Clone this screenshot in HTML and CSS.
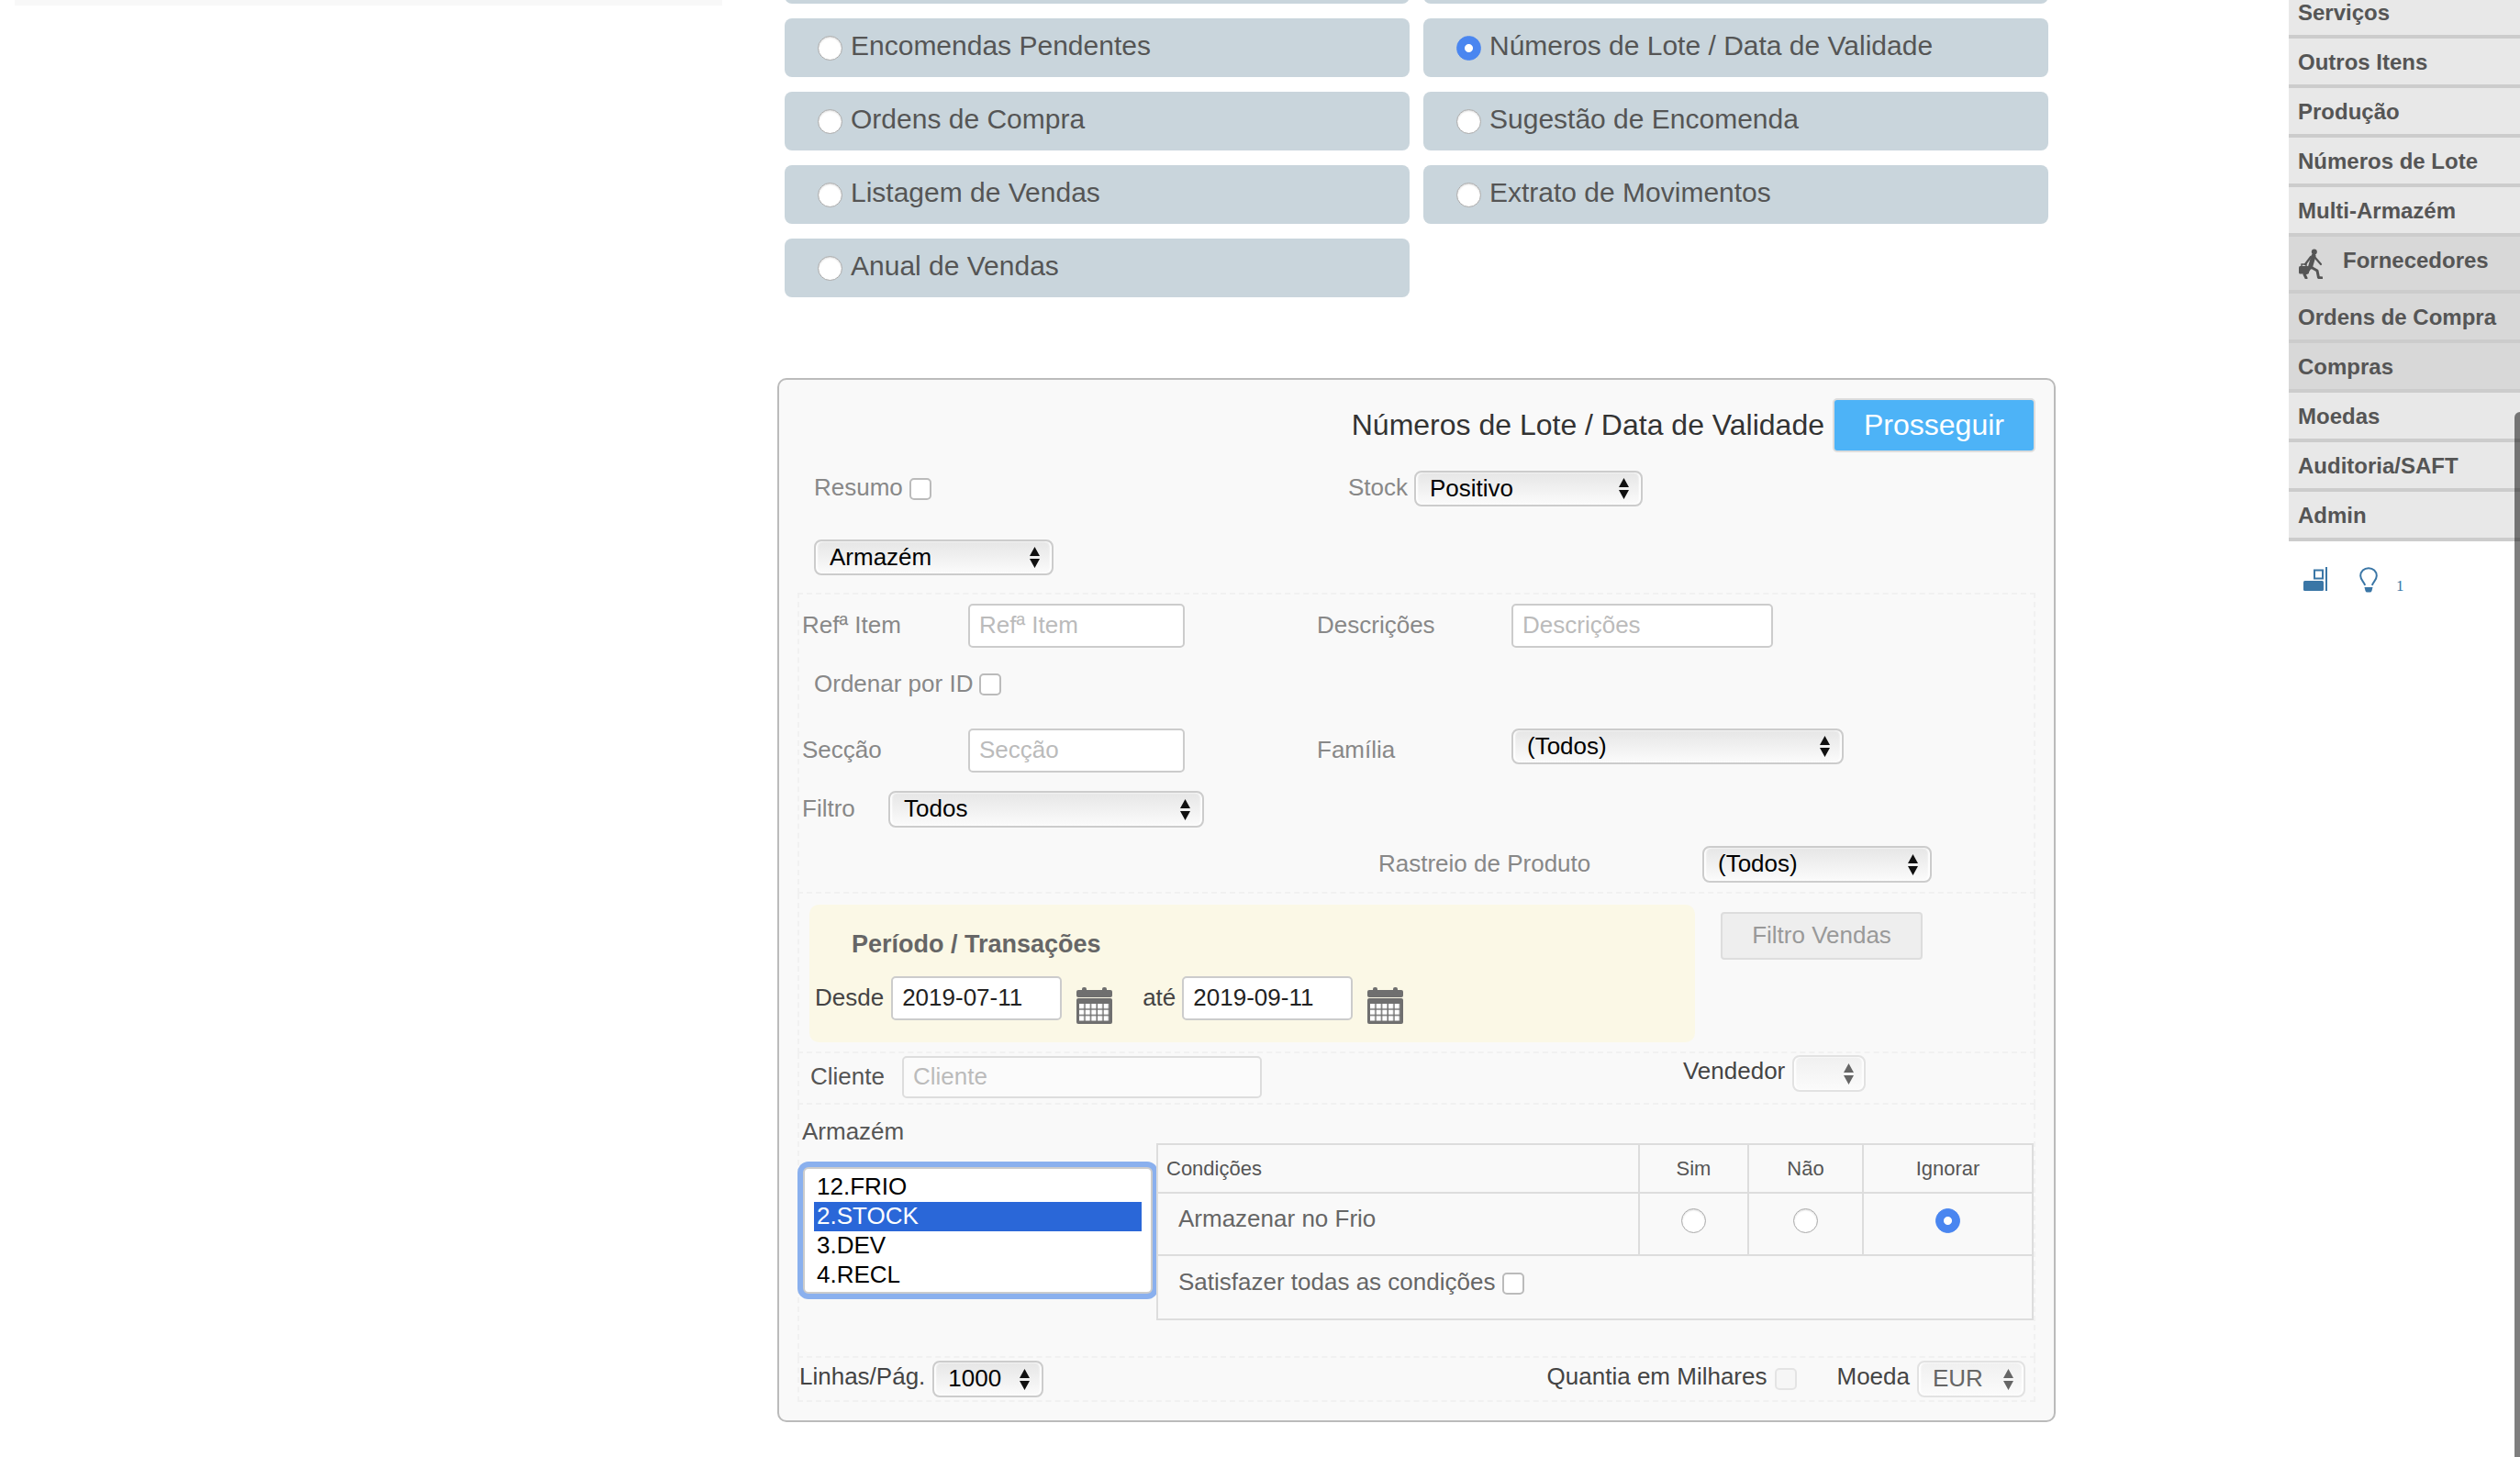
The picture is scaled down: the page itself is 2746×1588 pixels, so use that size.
FILE: index.html
```html
<!DOCTYPE html>
<html lang="pt">
<head>
    <meta charset="UTF-8">
    <title>Números de Lote / Data de Validade</title>
    <link rel="stylesheet" href="styles.css">
</head>
<body>
    <svg class="defs" width="0" height="0">
        <defs>
            <pattern id="cells" x="3" y="18" width="6.67" height="6.67" patternUnits="userSpaceOnUse">
                <rect width="5.2" height="5.2" fill="#fff"/>
            </pattern>
            <symbol id="calendar" viewBox="0 0 39 40">
                <rect x="0" y="3" width="39" height="8" rx="2" fill="#6f6f6f"/>
                <rect x="6" y="0" width="5" height="6" rx="2" fill="#6f6f6f"/>
                <rect x="28" y="0" width="5" height="6" rx="2" fill="#6f6f6f"/>
                <rect x="0" y="12" width="39" height="28" rx="2" fill="#6f6f6f"/>
                <rect x="3" y="18" width="33" height="19" fill="url(#cells)"/>
            </symbol>
        </defs>
    </svg>
    <div class="page">
        <div class="left-bar"></div>
        <div class="main">
            <div class="options">
                <div class="option"></div>
                <div class="option"></div>
                <label class="option"><input type="radio" class="radio">Encomendas Pendentes</label>
                <label class="option"><input type="radio" class="radio" checked>Números de Lote / Data de Validade</label>
                <label class="option"><input type="radio" class="radio">Ordens de Compra</label>
                <label class="option"><input type="radio" class="radio">Sugestão de Encomenda</label>
                <label class="option"><input type="radio" class="radio">Listagem de Vendas</label>
                <label class="option"><input type="radio" class="radio">Extrato de Movimentos</label>
                <label class="option"><input type="radio" class="radio">Anual de Vendas</label>
            </div>

            <form class="panel">
                <div class="panel-head">
                    <span class="panel-title">Números de Lote / Data de Validade</span>
                    <button type="button" class="go">Prosseguir</button>
                </div>

                <div class="row-top">
                    <div class="resumo">
                        <span class="lbl">Resumo</span>
                        <input type="checkbox" class="check">
                    </div>
                    <span class="lbl">Stock</span>
                    <select class="sel sel-stock"><option>Positivo</option></select>
                </div>
                <div class="row-group">
                    <select class="sel sel-group"><option>Armazém</option></select>
                </div>

                <div class="sec sec-filters">
                    <div class="field-row">
                        <span class="lbl">Refª Item</span>
                        <input type="text" class="txt txt-short" placeholder="Refª Item">
                        <span class="lbl">Descrições</span>
                        <input type="text" class="txt txt-long" placeholder="Descrições">
                    </div>
                    <div class="row-order">
                        <span class="lbl">Ordenar por ID</span>
                        <input type="checkbox" class="check">
                    </div>
                    <div class="field-row row-section">
                        <span class="lbl">Secção</span>
                        <input type="text" class="txt txt-short" placeholder="Secção">
                        <span class="lbl">Família</span>
                        <select class="sel sel-family"><option>(Todos)</option></select>
                    </div>
                    <div class="row-filter">
                        <span class="lbl lbl-filter">Filtro</span>
                        <select class="sel sel-filter"><option>Todos</option></select>
                    </div>
                    <div class="row-track">
                        <span class="lbl lbl-track">Rastreio de Produto</span>
                        <select class="sel sel-track"><option>(Todos)</option></select>
                    </div>
                </div>

                <div class="sec sec-period">
                    <div class="period">
                        <div class="period-title">Período / Transações</div>
                        <div class="period-dates">
                            <span class="lbl-dark">Desde</span>
                            <input type="text" class="txt txt-date" value="2019-07-11">
                            <svg class="cal"><use href="#calendar"/></svg>
                            <span class="lbl-dark lbl-until">até</span>
                            <input type="text" class="txt txt-date" value="2019-09-11">
                            <svg class="cal"><use href="#calendar"/></svg>
                        </div>
                    </div>
                    <button type="button" class="sales">Filtro Vendas</button>
                </div>

                <div class="sec sec-client">
                    <span class="lbl-dark lbl-client">Cliente</span>
                    <input type="text" class="txt txt-client" placeholder="Cliente">
                    <span class="lbl-dark lbl-seller">Vendedor</span>
                    <select class="sel sel-off sel-seller"><option></option></select>
                </div>

                <div class="sec sec-stores">
                    <div class="stores">
                        <div class="lbl-dark lbl-stores">Armazém</div>
                        <div class="listbox">
                            <div class="item">12.FRIO</div>
                            <div class="item item-on">2.STOCK</div>
                            <div class="item">3.DEV</div>
                            <div class="item">4.RECL</div>
                        </div>
                    </div>
                    <table class="conds">
                        <tr class="conds-head">
                            <th class="c-name">Condições</th>
                            <th class="c-yes">Sim</th>
                            <th class="c-no">Não</th>
                            <th class="c-skip">Ignorar</th>
                        </tr>
                        <tr class="conds-row">
                            <td class="c-text">Armazenar no Frio</td>
                            <td class="c-radio"><input type="radio" class="radio"></td>
                            <td class="c-radio"><input type="radio" class="radio"></td>
                            <td class="c-radio"><input type="radio" class="radio" checked></td>
                        </tr>
                        <tr class="conds-all">
                            <td class="c-text" colspan="4">Satisfazer todas as condições <input type="checkbox" class="check"></td>
                        </tr>
                    </table>
                </div>

                <div class="sec sec-bottom">
                    <span class="lbl-dark">Linhas/Pág.</span>
                    <select class="sel sel-lines"><option>1000</option></select>
                    <span class="lbl-dark lbl-thousands">Quantia em Milhares</span>
                    <input type="checkbox" class="check check-off">
                    <span class="lbl-dark lbl-currency">Moeda</span>
                    <select class="sel sel-off sel-currency"><option>EUR</option></select>
                </div>
            </form>
        </div>

        <div class="side">
            <a class="side-item">Serviços</a>
            <a class="side-item">Outros Itens</a>
            <a class="side-item">Produção</a>
            <a class="side-item">Números de Lote</a>
            <a class="side-item">Multi-Armazém</a>
            <a class="side-item side-on side-head">
                <svg class="walker" viewBox="0 0 26 33" width="26" height="33">
                    <circle cx="16.8" cy="3.4" r="3" fill="#555"/>
                    <path d="M16 8 L12.5 20" stroke="#555" stroke-width="5" stroke-linecap="round" fill="none"/>
                    <path d="M17 9 L24 17 M13 9 L7 17" stroke="#555" stroke-width="2.2" stroke-linecap="round" fill="none"/>
                    <path d="M13 20 L20 24 L21.5 31.5 L25.5 32 M12 21 L9 26 L6 28 L8 32" stroke="#555" stroke-width="3" stroke-linecap="round" stroke-linejoin="round" fill="none"/>
                    <rect x="0" y="19" width="11" height="8.5" rx="1.5" fill="#555"/>
                    <path d="M3 19 V17 H8 V19" stroke="#555" stroke-width="1.4" fill="none"/>
                </svg>
                <span class="side-head-text">Fornecedores</span>
            </a>
            <a class="side-item side-on">Ordens de Compra</a>
            <a class="side-item side-on">Compras</a>
            <a class="side-item">Moedas</a>
            <a class="side-item">Auditoria/SAFT</a>
            <a class="side-item">Admin</a>
            <div class="side-tools">
                <svg viewBox="0 0 26 26" width="26" height="26">
                    <rect x="0" y="15" width="22" height="11" rx="1.5" fill="#3a76a6"/>
                    <rect x="12" y="3.5" width="9" height="9" fill="none" stroke="#3a76a6" stroke-width="2"/>
                    <rect x="24" y="0" width="2" height="26" fill="#3a76a6"/>
                </svg>
                <svg class="bulb" viewBox="0 0 20 28" width="20" height="28">
                    <path d="M6 20 C5.5 16.5 1.2 14.5 1.2 9.6 C1.2 4.6 5.2 1.2 10 1.2 C14.8 1.2 18.8 4.6 18.8 9.6 C18.8 14.5 14.5 16.5 14 20" fill="none" stroke="#3a76a6" stroke-width="2"/>
                    <path d="M5.5 22 H14.5 L13.5 26 Q13 27.5 11.5 27.5 H8.5 Q7 27.5 6.5 26 Z" fill="#3a76a6"/>
                </svg>
                <span class="tool-count">1</span>
            </div>
        </div>
    </div>
    <div class="scroll-thumb"></div>
</body>
</html>
```

FILE: styles.css
```css
html, body {
    margin: 0;
    height: 1588px;
    overflow: hidden;
    background: #fff;
}
body {
    font-family: "Liberation Sans", Arial, sans-serif;
    font-size: 26px;
    color: #555;
}
.defs {
    display: block;
    height: 0;
}
input, select, button {
    font-family: "Liberation Sans", Arial, sans-serif;
    font-size: 26px;
    margin: 0;
    box-sizing: border-box;
}
.page {
    display: flex;
    align-items: flex-start;
    margin-top: -60px;
}
.left-bar {
    width: 771px;
    height: 66px;
    margin-left: 16px;
    background: #f8f8f8;
}
.main {
    width: 1393px;
    margin-left: 60px;
}

/* report options */
.options {
    display: grid;
    grid-template-columns: 681px 681px;
    grid-auto-rows: 64px;
    column-gap: 15px;
    row-gap: 16px;
    margin-left: 8px;
}
.option {
    display: flex;
    align-items: center;
    padding-left: 36px;
    padding-bottom: 4px;
    box-sizing: border-box;
    background: #c9d5dc;
    border-radius: 8px;
    font-size: 30px;
    color: #555;
}
.radio {
    appearance: none;
    width: 27px;
    height: 27px;
    margin: 4px 9px 0 0;
    flex: none;
    border: 1px solid #aaa;
    border-radius: 50%;
    background: #fff;
    box-shadow: inset 0 1px 2px rgba(0, 0, 0, 0.15);
}
.radio:checked {
    border-color: #4a86f0;
    box-shadow: none;
    background: radial-gradient(circle, #fff 0, #fff 4px, #4a86f0 5px);
}

/* panel */
.panel {
    margin-top: 88px;
    height: 1138px;
    box-sizing: border-box;
    border: 2px solid #bbb;
    border-radius: 10px;
    background: #f9f9f9;
}
.panel-head {
    display: flex;
    justify-content: flex-end;
    align-items: center;
    gap: 9px;
    padding: 20px 20px 0 0;
}
.panel-title {
    font-size: 32px;
    color: #333;
}
.go {
    width: 221px;
    height: 59px;
    border: 2px solid #ddd;
    border-radius: 5px;
    background: #4db3f7;
    color: #fff;
    font-size: 32px;
}
.lbl {
    color: #888;
    white-space: nowrap;
    margin-bottom: 2px;
}
.lbl-dark {
    color: #444;
    white-space: nowrap;
}
.check {
    appearance: none;
    width: 24px;
    height: 24px;
    flex: none;
    border: 2px solid #bbb;
    border-radius: 5px;
    background: #fff;
    vertical-align: middle;
}
.check-off {
    border-color: #e4e4e4;
    background: #f6f6f6;
}
.sel {
    appearance: none;
    height: 39px;
    padding: 0 30px 2px 15px;
    border: 2px solid #ccc;
    border-radius: 8px;
    color: #000;
    background-color: #f4f4f4;
    background-image:
        url("data:image/svg+xml,%3Csvg xmlns='http://www.w3.org/2000/svg' width='13' height='23'%3E%3Cpath d='M6.5 0 12 10H1ZM6.5 23 1 13H12Z' fill='%23111'/%3E%3C/svg%3E"),
        linear-gradient(#e6e6e6, #fbfbfb);
    background-repeat: no-repeat;
    background-position: right 12px center, 0 0;
    box-shadow: inset 2px 0 2px #fff, inset -2px 0 2px #fff;
}
.sel-off {
    color: #666;
    border-color: #e2e2e2;
    background-image:
        url("data:image/svg+xml,%3Csvg xmlns='http://www.w3.org/2000/svg' width='13' height='23'%3E%3Cpath d='M6.5 0 12 10H1ZM6.5 23 1 13H12Z' fill='%23666'/%3E%3C/svg%3E"),
        linear-gradient(#f0f0f0, #fbfbfb);
    background-position: right 10px center, 0 0;
}
.txt {
    height: 48px;
    padding: 0 10px 2px;
    border: 2px solid #ccc;
    border-radius: 5px;
    background: #fff;
    color: #222;
}
.txt::placeholder {
    color: #bbb;
}

.row-top {
    display: flex;
    align-items: center;
    height: 39px;
    margin-top: 20px;
    padding-left: 38px;
}
.resumo {
    display: flex;
    align-items: center;
    gap: 7px;
    width: 582px;
}
.sel-stock {
    width: 249px;
    margin-left: 7px;
}
.row-group {
    margin-top: 36px;
    padding-left: 38px;
    height: 39px;
}
.sel-group {
    width: 261px;
}

/* dashed sections */
.sec {
    margin: 0 20px;
    border: 2px dashed #f1f1f1;
    border-top: 0;
    padding-left: 3px;
}
.sec-filters {
    margin-top: 19px;
    border-top: 2px dashed #f1f1f1;
    padding-top: 10px;
    padding-bottom: 10px;
}
.field-row {
    display: grid;
    grid-template-columns: 181px 380px 212px auto;
    align-items: center;
    justify-items: start;
    height: 48px;
}
.row-order {
    display: flex;
    align-items: center;
    gap: 7px;
    height: 24px;
    margin-top: 28px;
    padding-left: 13px;
}
.row-section {
    margin-top: 36px;
}
.txt-short {
    width: 236px;
}
.txt-long {
    width: 285px;
}
.sel-family {
    width: 362px;
    align-self: start;
}
.row-filter {
    display: flex;
    align-items: center;
    height: 40px;
    margin-top: 20px;
}
.lbl-filter {
    width: 94px;
}
.sel-filter {
    width: 344px;
    height: 40px;
}
.row-track {
    display: flex;
    align-items: center;
    height: 40px;
    margin-top: 20px;
    padding-left: 628px;
}
.lbl-track {
    width: 353px;
}
.sel-track {
    width: 250px;
    height: 40px;
}
.sec-period {
    display: flex;
    align-items: flex-start;
    gap: 28px;
    padding-left: 11px;
    padding-top: 12px;
    padding-bottom: 10px;
}
.period {
    width: 965px;
    height: 150px;
    box-sizing: border-box;
    padding: 28px 0 0 6px;
    background: #fbf8e6;
    border-radius: 10px;
}
.period-title {
    margin-left: 40px;
    font-size: 27px;
    font-weight: bold;
    line-height: 30px;
    color: #666;
}
.period-dates {
    display: flex;
    align-items: flex-start;
    margin-top: 20px;
    line-height: 46px;
}
.txt-date {
    width: 186px;
    margin-left: 8px;
}
.cal {
    width: 39px;
    height: 40px;
    margin: 12px 0 0 16px;
}
.lbl-until {
    margin-left: 33px;
    margin-right: -1px;
}
.sales {
    width: 220px;
    height: 52px;
    margin-top: 8px;
    padding-bottom: 3px;
    border: 2px solid #ddd;
    border-radius: 4px;
    background: #eee;
    color: #999;
}
.sec-client {
    display: flex;
    align-items: flex-start;
    height: 56px;
    box-sizing: border-box;
    padding-top: 3px;
    padding-left: 12px;
}
.lbl-client {
    line-height: 44px;
    color: #555;
}
.txt-client {
    width: 392px;
    height: 46px;
    margin-left: 19px;
    border-color: #ddd;
    background: #fbfbfb;
}
.lbl-seller {
    margin-left: 459px;
    line-height: 32px;
}
.sel-seller {
    width: 80px;
    height: 40px;
    margin-left: 8px;
    margin-top: -1px;
}
.sec-stores {
    display: flex;
    align-items: flex-start;
    height: 276px;
    box-sizing: border-box;
    padding-left: 0;
}
.stores {
    width: 389px;
    padding-left: 3px;
    padding-top: 14px;
    box-sizing: border-box;
}
.lbl-stores {
    line-height: 30px;
    color: #555;
}
.listbox {
    box-sizing: border-box;
    width: 381px;
    height: 138px;
    margin: 24px 0 0 1px;
    padding: 4px 10px;
    border: 2px solid #ccc;
    border-radius: 6px;
    background: #fff;
    box-shadow: 0 0 0 6px #8ab0ee;
}
.item {
    height: 32px;
    line-height: 30px;
    padding-left: 3px;
    color: #000;
}
.item-on {
    background: #2a67d8;
    color: #fff;
}
.conds {
    width: 956px;
    margin-top: 42px;
    border-collapse: collapse;
    table-layout: fixed;
}
.conds th, .conds td {
    border: 2px solid #ddd;
    padding: 0;
    box-sizing: border-box;
}
.conds th {
    font-size: 22px;
    font-weight: normal;
    color: #555;
    height: 53px;
    text-align: center;
}
.conds .c-name {
    width: 525px;
    text-align: left;
    padding-left: 9px;
}
.conds .c-yes {
    width: 119px;
}
.c-no {
    width: 125px;
}
.conds-row td {
    height: 68px;
    vertical-align: top;
}
.conds-all td {
    height: 70px;
    vertical-align: top;
}
.conds .c-text {
    padding: 12px 0 0 22px;
    color: #666;
}
.conds-all .c-text {
    padding-top: 13px;
}
.c-radio {
    text-align: center;
}
.c-radio .radio {
    margin: 16px 0 0;
}
.sec-bottom {
    display: flex;
    align-items: center;
    height: 48px;
    box-sizing: border-box;
    padding-left: 0;
    padding-right: 9px;
}
.sec-bottom .lbl-dark {
    margin-bottom: 5px;
}
.sel-lines {
    width: 121px;
    height: 40px;
    margin-left: 8px;
}
.lbl-thousands {
    margin-left: auto;
}
.check-off {
    margin-left: 8px;
}
.lbl-currency {
    margin-left: 44px;
}
.sel-currency {
    width: 118px;
    height: 40px;
    margin-left: 8px;
}

/* right menu */
.side {
    width: 252px;
    margin-left: auto;
    padding-top: 48px;
}
.side-item {
    display: block;
    height: 50px;
    line-height: 52px;
    padding-left: 10px;
    border-bottom: 4px solid #ccc;
    background: #e8e8e8;
    font-size: 24px;
    font-weight: bold;
    color: #555;
}
.side-on {
    background: #d8d8d8;
}
.side-head {
    display: flex;
    align-items: center;
    height: 58px;
    line-height: normal;
    padding-left: 11px;
}
.side-head-text {
    margin-left: 22px;
    margin-bottom: 7px;
}
.side-tools {
    display: flex;
    align-items: flex-start;
    margin-top: 28px;
    padding-left: 16px;
}
.bulb {
    margin-left: 35px;
}
.tool-count {
    margin: 11px 0 0 20px;
    font-family: "Liberation Serif", serif;
    font-size: 17px;
    color: #3a76a6;
}
.scroll-thumb {
    position: absolute;
    top: 449px;
    right: 0;
    bottom: 0;
    width: 6px;
    border-radius: 6px 0 0 0;
    background: rgba(0, 0, 0, 0.5);
}
```
